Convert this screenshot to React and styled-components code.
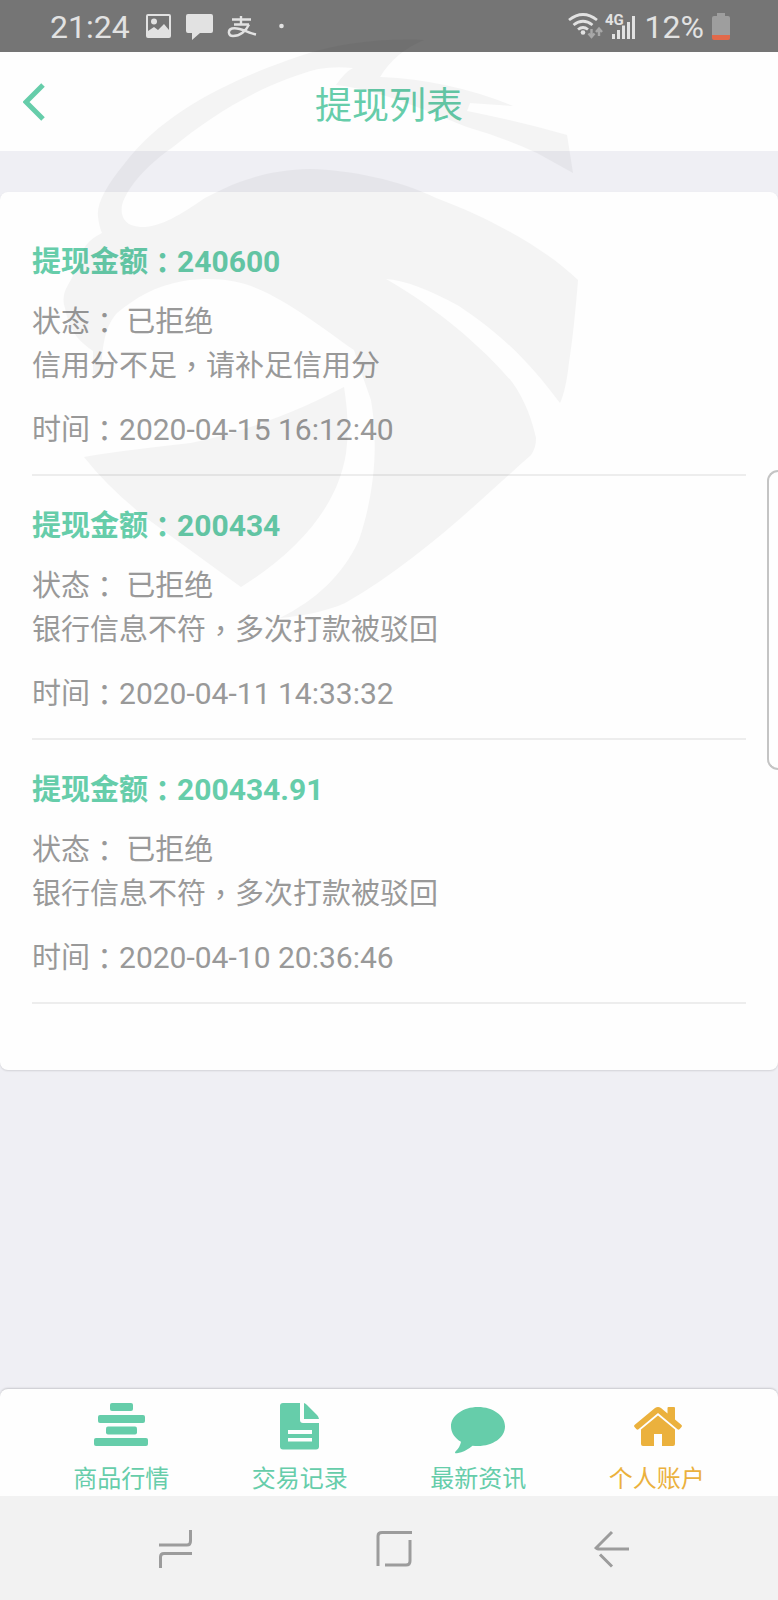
import styled, { createGlobalStyle } from "styled-components";

const GlobalStyle = createGlobalStyle`
  :root {
    --green: #66cdaa;
    --orange: #ebb13d;
    --gray: #999;
    --medium-font: 29px;
    --number-font: 30px;
  }
  * {
    box-sizing: border-box;
  }
  body {
    margin: 0;
    font-family: Roboto, "Noto Sans CJK SC", sans-serif;
    background: #efeff4;
  }
  h1, h2, p, ul {
    margin: 0;
    padding: 0;
  }
`;

const Page = styled.div`
  position: relative;
  display: flex;
  flex-direction: column;
  min-height: 100vh;
  overflow: hidden;
`;

const StatusBar = styled.div`
  display: flex;
  justify-content: space-between;
  align-items: center;
  height: 52px;
  padding: 2px 48px 0 50px;
  background: #757575;
  color: #e2e2e2;
  font-size: 32px;
`;

const StatusGroup = styled.div`
  display: flex;
  align-items: center;
  gap: ${(props) => props.$gap}px;
`;

const Header = styled.header`
  display: grid;
  grid-template-columns: 68px 1fr 68px;
  align-items: center;
  height: 99px;
  background: #fefefe;
`;

const BackButton = styled.button`
  display: flex;
  justify-content: center;
  padding: 0;
  border: none;
  background: none;
  color: var(--green);
  cursor: pointer;
`;

const Title = styled.h1`
  padding-top: 2px;
  text-align: center;
  font-size: 37px;
  font-weight: 400;
  color: var(--green);
`;

const Main = styled.main`
  flex: 1;
  padding: 41px 0;
`;

const Card = styled.ul`
  padding: 20px 32px 66px;
  border-radius: 8px;
  background: #fefefe;
  box-shadow: 0 1px 2px rgba(0, 0, 0, 0.12);
  list-style: none;
`;

const Record = styled.li`
  padding: 28px 0 22px;
  border-bottom: 2px solid #ededed;
  font-size: var(--medium-font);
  line-height: 44px;
  color: var(--gray);
`;

const Amount = styled.h2`
  margin-bottom: 16px;
  font-size: var(--medium-font);
  font-weight: 700;
  color: var(--green);
`;

const Time = styled.p`
  margin-top: 20px;
`;

// the TC face centres full width punctuation in its box
const Mark = styled.span`
  font-family: "Noto Sans CJK TC", sans-serif;
  line-height: 1;
  vertical-align: -2px;
`;

const Figures = styled.span`
  font-size: var(--number-font);
  line-height: 1;
`;

const TabBar = styled.nav`
  display: grid;
  grid-template-columns: repeat(4, 1fr);
  height: 107px;
  padding: 13px 32px 0;
  border-radius: 8px 8px 0 0;
  background: #fefefe;
  box-shadow: 0 -1px 2px rgba(0, 0, 0, 0.16);
`;

const Tab = styled.a`
  display: flex;
  flex-direction: column;
  align-items: center;
  gap: 9px;
  font-size: 24px;
  line-height: 32px;
  text-decoration: none;
  color: ${(props) => (props.$active ? "var(--orange)" : "var(--green)")};
`;

const SystemNav = styled.div`
  display: grid;
  grid-template-columns: repeat(3, 1fr);
  height: 104px;
  padding: 2px 57px 0 67px;
  background: #f2f2f2;
`;

const SystemButton = styled.button`
  display: flex;
  justify-content: center;
  align-items: center;
  padding: 0;
  border: none;
  background: none;
  color: #9c9c9c;
`;

const EdgeHandle = styled.div`
  position: absolute;
  top: 470px;
  right: 0;
  width: 11px;
  height: 300px;
  border: 2px solid #c4c4c4;
  border-right: none;
  border-radius: 14px 0 0 14px;
`;

const Watermark = styled.svg`
  position: absolute;
  top: 0;
  left: 0;
  opacity: 0.037;
  pointer-events: none;
`;

const records = [
  { id: 1, amount: "240600", reason: "信用分不足，请补足信用分", time: "2020-04-15 16:12:40" },
  { id: 2, amount: "200434", reason: "银行信息不符，多次打款被驳回", time: "2020-04-11 14:33:32" },
  { id: 3, amount: "200434.91", reason: "银行信息不符，多次打款被驳回", time: "2020-04-10 20:36:46" },
];

const tabs = [
  {
    name: "商品行情",
    icon: (
      <>
        <rect x="17" y="1" width="23" height="8" rx="2" />
        <rect x="5" y="13" width="47" height="8" rx="2" />
        <rect x="13" y="24.5" width="31" height="8" rx="2" />
        <rect x="1" y="36" width="54" height="8" rx="2" />
      </>
    ),
  },
  {
    name: "交易记录",
    icon: (
      <path
        fillRule="evenodd"
        d="M11 1H28V18Q28 21 31 21H47V44.500Q47 47.500 44 47.500H11Q8 47.500 8 44.500V4Q8 1 11 1ZM16 28V32H40V28ZM16 36V39.500H40V36ZM32 1Q33.500 1.500 35 3L45 13Q46.500 14.500 47 17H32Z"
      />
    ),
  },
  {
    name: "最新资讯",
    icon: (
      <path d="M28 5C43 5 55 13.500 55 24.500S43 44 28 44Q25 44 22.500 43.700Q16 49.500 7 51.200Q4 51.500 5.500 49.500Q10 45.500 11 39.800C5 36.300 1 30.800 1 24.500C1 13.500 13 5 28 5Z" />
    ),
  },
  {
    name: "个人账户",
    active: true,
    icon: (
      <>
        <path d="M29 13.500L46 27.500V42Q46 44 44 44H33V32H25V44H14Q12 44 12 42V27.500Z" />
        <path d="M5.500 25Q4.500 24 5.500 23L26 6Q29 4 32 6L38.500 11.500V6Q38.500 5 39.500 5H45Q46 5 46 6V17.500L52.500 23Q53.500 24 52.500 25L50.500 27.300Q49.500 28 48.500 27.300L29 11L9.500 27.300Q8.500 28 7.500 27.300Z" />
      </>
    ),
  },
];

function Punctuated({ text }) {
  return text.split(/([，：])/).map((part, i) => (i % 2 ? <Mark key={i}>{part}</Mark> : part));
}

function NoticeIcons() {
  return (
    <svg width="144" height="32" viewBox="144 11 144 32" fill="#e2e2e2" aria-hidden="true">
      <path
        fillRule="evenodd"
        d="M148 14H169Q171 14 171 16V36Q171 38 169 38H148Q146 38 146 36V16Q146 14 148 14ZM148 16V31L154 27L158 30L164 24L169 30V16Z"
      />
      <circle cx="154" cy="21.500" r="3" />
      <path d="M188 14H211Q213 14 213 16V31Q213 33 211 33H200L192 40V33H188Q186 33 186 31V16Q186 14 188 14Z" />
      <g fill="none" stroke="#e2e2e2" strokeWidth="2.400">
        <path d="M232 19.500H251M241 16V24.500M234 24.500H249" />
        <path d="M249 24.500C246 31 240 36 233 36C228 36 227.500 30 232 28.500C239 26.500 247 32.500 256 34.500" />
      </g>
      <circle cx="281.500" cy="26" r="2.300" />
    </svg>
  );
}

function SignalIcons() {
  return (
    <svg width="70" height="32" viewBox="567 11 70 32" aria-hidden="true">
      <g fill="none" stroke="#e2e2e2" strokeWidth="2.800">
        <path d="M569 20Q583 9 597 20" />
        <path d="M573.500 25Q583 17.500 592.500 25" />
        <path d="M578 29.500Q583 25.500 588 29.500" />
      </g>
      <circle cx="583" cy="32.500" r="2.300" fill="#e2e2e2" />
      <g fill="none" stroke="#a8a8a8" strokeWidth="2.400">
        <path d="M591.500 29V36M588.500 33.500L591.500 37L594.500 33.500" />
        <path d="M599 36V29M596 32L599 28.500L602 32" />
      </g>
      <text x="605" y="25" fontSize="15" fontWeight="700" fill="#e2e2e2">
        4G
      </text>
      <path
        stroke="#e2e2e2"
        strokeWidth="3"
        d="M613.500 34V39M618.500 30V39M623.500 25.500V39M628.500 22V39M633.500 16V39"
      />
    </svg>
  );
}

function BatteryIcon() {
  return (
    <svg width="18" height="28" viewBox="0 0 18 28" aria-hidden="true">
      <path d="M5 0H13V3H16Q18 3 18 5V22H0V5Q0 3 2 3H5Z" fill="#9e9e9e" />
      <path d="M0 22H18V25Q18 27 16 27H2Q0 27 0 25Z" fill="#e2694a" />
    </svg>
  );
}

function Emblem() {
  return (
    <Watermark width="600" height="640" viewBox="0 0 600 640" aria-hidden="true">
      <path d="M424 40C380 38 335 44 300 56C235 78 165 110 125 163Q96 198 98 216Q99 226 102 233Q88 240 83 250Q77 270 68 285Q61 297 65 308Q68 325 77 337Q83 344 93 351V374H101C102 340 107 324 117 313C135 298 155 286 183 281C210 277 235 279 256 288C290 302 325 330 354 350Q362 375 371 400C378 440 376 490 359 540C343 575 316 600 280 618C300 616 325 612 345 603C420 560 480 500 531 455Q536 448 536 438C532 420 525 400 512 382C485 350 440 310 386 279C405 280 430 290 459 306C510 340 535 370 560 403Q566 390 569 362Q574 330 578 280C550 253 500 222 436 198C400 180 350 170 310 169C270 170 240 179 205 198C180 215 160 228 140 227C125 226 120 217 122 205C128 185 150 163 173 147C210 117 260 84 318 69Q335 66 353 68Q345 72 336 85C380 90 420 108 467 127Q505 138 537 153Q555 163 573 173L567 135Q517 121 467 111L470 103L513 106Q450 80 380 77Q395 52 424 40Z" />
      <path d="M84 457Q110 452 191 443C255 430 310 405 344 387Q350 425 346 453C338 505 300 550 241 587Q190 550 149 520Q110 490 84 457Z" />
    </Watermark>
  );
}

export default function App() {
  return (
    <Page>
      <GlobalStyle />
      <StatusBar>
        <StatusGroup $gap={14}>
          <span>21:24</span>
          <NoticeIcons />
        </StatusGroup>
        <StatusGroup $gap={8}>
          <SignalIcons />
          <span>12%</span>
          <BatteryIcon />
        </StatusGroup>
      </StatusBar>
      <Header>
        <BackButton type="button" aria-label="返回">
          <svg width="22" height="38" viewBox="0 0 22 38" fill="none" stroke="currentColor" strokeWidth="5">
            <path d="M20 2L3 19L20 36" />
          </svg>
        </BackButton>
        <Title>提现列表</Title>
      </Header>
      <Main>
        <Card>
          {records.map((item) => (
            <Record key={item.id}>
              <Amount>
                <Punctuated text="提现金额：" />
                <Figures>{item.amount}</Figures>
              </Amount>
              <p>
                <Punctuated text="状态： 已拒绝" />
              </p>
              <p>
                <Punctuated text={item.reason} />
              </p>
              <Time>
                <Punctuated text="时间：" />
                <Figures>{item.time}</Figures>
              </Time>
            </Record>
          ))}
        </Card>
      </Main>
      <TabBar>
        {tabs.map((tab) => (
          <Tab key={tab.name} href="#" $active={tab.active}>
            <svg width="56" height="52" viewBox="0 0 56 52" fill="currentColor" aria-hidden="true">
              {tab.icon}
            </svg>
            {tab.name}
          </Tab>
        ))}
      </TabBar>
      <SystemNav>
        <SystemButton type="button" aria-label="最近任务">
          <svg width="36" height="40" viewBox="0 0 36 40" fill="none" stroke="currentColor" strokeWidth="3">
            <path d="M1 16H29Q32.500 16 32.500 12V1M34 24.500H6Q2.500 24.500 2.500 28V39" />
          </svg>
        </SystemButton>
        <SystemButton type="button" aria-label="主屏幕">
          <svg width="36" height="40" viewBox="0 0 36 40" fill="none" stroke="currentColor" strokeWidth="3">
            <path d="M2 37V7Q2 3.500 6 3.500H36M9 36H30Q34 36 34 32V11" />
          </svg>
        </SystemButton>
        <SystemButton type="button" aria-label="返回上一页">
          <svg width="36" height="40" viewBox="0 0 36 40" fill="none" stroke="currentColor" strokeWidth="3">
            <path d="M18 3L2 19Q3 20 4 20H35M6 25.500L18 37.500" />
          </svg>
        </SystemButton>
      </SystemNav>
      <EdgeHandle />
      <Emblem />
    </Page>
  );
}
